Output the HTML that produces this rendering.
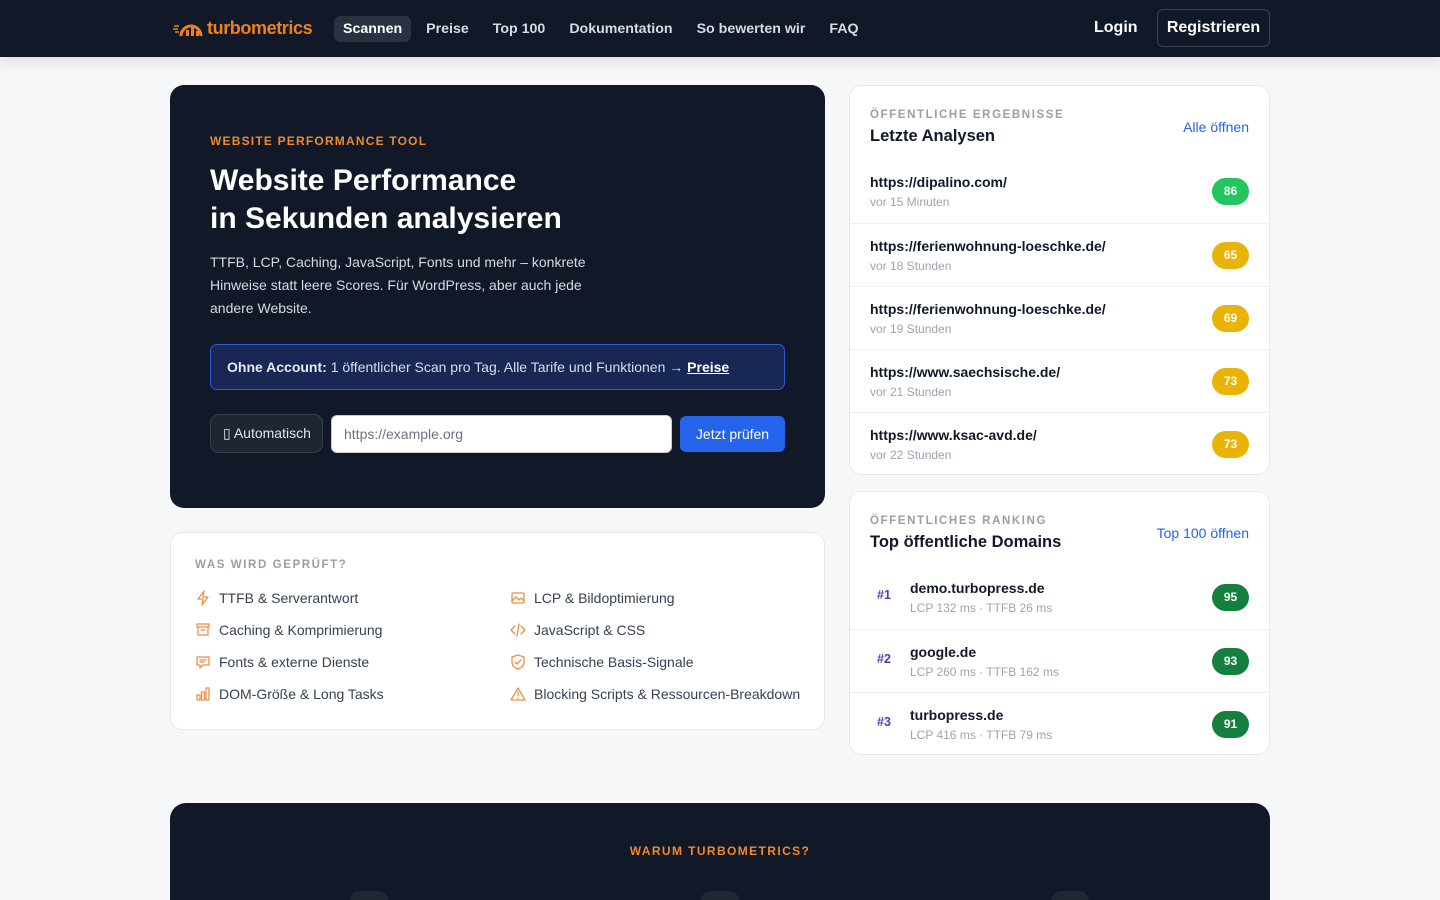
<!DOCTYPE html>
<html><head><meta charset="utf-8"><style>
*{box-sizing:border-box;margin:0;padding:0}
html,body{width:1440px;height:900px;overflow:hidden}
body{background:#f6f7f9;font-family:"Liberation Sans",sans-serif;color:#111827;position:relative}
.hdr{height:57px;background:#111827;position:relative;box-shadow:0 4px 14px rgba(0,0,0,.12)}
.logo{position:absolute;left:172px;top:17px;color:#f07f1c;font-weight:700;font-size:18px;display:flex;align-items:center;gap:1px;letter-spacing:-.4px}
.nav{position:absolute;left:334px;top:16px;display:flex}
.nav a{color:#d6dbe4;font-weight:700;font-size:14.2px;padding:5px 12px;border-radius:6px;text-decoration:none}
.nav a.act{background:#2a3140;color:#fff;padding:5px 9px;margin-right:3px}
.login{position:absolute;left:1094px;top:19px;color:#fff;font-weight:700;font-size:16px}
.reg{position:absolute;left:1157px;top:9px;width:113px;height:38px;border:1px solid #3a4252;border-radius:6px;color:#fff;font-weight:700;font-size:16px;text-align:center;line-height:36px}
.hero{position:absolute;left:170px;top:85px;width:655px;height:423px;background:#111827;border-radius:14px;padding:0 40px}
.eyebrow{color:#f0892f;font-weight:700;font-size:12px;letter-spacing:1.2px}
.hero h1{color:#fff;font-size:30px;line-height:38px;margin-top:14px;font-weight:700}
.hero p{color:#d5dae2;font-size:14px;line-height:23px;margin-top:13px;width:390px}
.note{margin-top:24px;height:46px;border:1px solid #2f5bd6;background:#182753;border-radius:7px;color:#d8dfee;font-size:14px;line-height:44px;padding-left:16px}
.note b{color:#e6ebf5}.note u{color:#fff;font-weight:700}
.row{display:flex;margin-top:24px;gap:8px;align-items:center}
.auto{width:113px;height:39px;border:1px solid #363e4c;background:#1f2632;border-radius:9px;color:#e3e6eb;font-size:14px;line-height:37px;padding-left:12px}
.inp{width:341px;height:38px;background:#fff;border-radius:6px;border:1px solid #ccc;color:#6b7280;font-size:14px;line-height:36px;padding-left:12px}
.btn{width:105px;height:36px;background:#2563eb;border-radius:6px;color:#fff;font-size:14px;line-height:36px;text-align:center}
.feat{position:absolute;left:170px;top:532px;width:655px;height:198px;background:#fff;border:1px solid #e6e8ec;border-radius:12px;padding:26px 24px}
.lbl{color:#9a9ea6;font-weight:700;font-size:11.5px;letter-spacing:1.6px}
.grid{display:grid;grid-template-columns:315px 300px;row-gap:14px;margin-top:18px}
.grid div{font-size:14px;color:#374151;display:flex;align-items:center;gap:8px;height:18px}
.grid svg{width:16px;height:16px;fill:none;stroke:#e8914a;stroke-width:1.3;stroke-linecap:round;stroke-linejoin:round}
.card{position:absolute;left:849px;width:421px;background:#fff;border:1px solid #e6e8ec;border-radius:12px}
.ch{position:relative;height:74px;padding:23px 20px 0}
.ch h3{font-size:16.5px;margin-top:6px;font-weight:700}
.ch a{position:absolute;right:20px;top:33px;color:#2563eb;font-size:14px}
.it{height:63px;border-top:1px solid #eef0f3;position:relative;padding:14px 20px 0}
.ch + .it{border-top:none}
.it .t{font-weight:700;font-size:14px;color:#111827}
.it .s{font-size:12px;color:#9ca3af;margin-top:5px}
.bd{position:absolute;right:20px;top:18px;width:37px;height:27px;border-radius:14px;color:#fff;font-weight:700;font-size:12px;text-align:center;line-height:27px}
.g{background:#22c55e}.y{background:#eab308}.dg{background:#15803d}
.rk{position:absolute;left:27px;top:22px;color:#4f3bbf;font-weight:700;font-size:12.5px}
.r2 .it{padding-left:60px}
.bot{position:absolute;left:170px;top:803px;width:1100px;height:97px;background:#111827;border-radius:16px 16px 0 0;text-align:center;overflow:hidden}
.bot .eyebrow{margin-top:41px;letter-spacing:1.4px}
.dot{position:absolute;top:88px;width:38px;height:40px;border-radius:10px;background:#1f2735}
</style></head><body>
<div class="hdr">
<div class="logo"><svg width="34" height="22" viewBox="0 0 34 22"><path d="M2 9h5M1 12h5M3 15h4" stroke="#f07f1c" stroke-width="1.5"/><path d="M9 19a10 10 0 1 1 20 0" fill="none" stroke="#f07f1c" stroke-width="3"/><rect x="14" y="13" width="3" height="6" fill="#f07f1c"/><rect x="19" y="10" width="3" height="9" fill="#f07f1c"/><rect x="24" y="14" width="3" height="5" fill="#f07f1c"/></svg>turbometrics</div>
<div class="nav"><a class="act">Scannen</a><a>Preise</a><a>Top 100</a><a>Dokumentation</a><a>So bewerten wir</a><a>FAQ</a></div>
<div class="login">Login</div><div class="reg">Registrieren</div>
</div>
<div class="hero">
<div class="eyebrow" style="margin-top:49px">WEBSITE PERFORMANCE TOOL</div>
<h1>Website Performance<br>in Sekunden analysieren</h1>
<p>TTFB, LCP, Caching, JavaScript, Fonts und mehr – konkrete Hinweise statt leere Scores. Für WordPress, aber auch jede andere Website.</p>
<div class="note"><b>Ohne Account:</b> 1 öffentlicher Scan pro Tag. Alle Tarife und Funktionen → <u>Preise</u></div>
<div class="row"><div class="auto">▯ Automatisch</div><div class="inp">https://example.org</div><div class="btn">Jetzt prüfen</div></div>
</div>
<div class="feat"><div class="lbl">WAS WIRD GEPRÜFT?</div>
<div class="grid">
<div><svg viewBox="0 0 16 16"><path d="M9 1L3 9h5l-1 6 6-8H8z"/></svg>TTFB &amp; Serverantwort</div>
<div><svg viewBox="0 0 16 16"><rect x="2" y="3" width="12" height="10" rx="1"/><path d="M2 11l4-4 3 3 2-2 3 3"/></svg>LCP &amp; Bildoptimierung</div>
<div><svg viewBox="0 0 16 16"><rect x="2" y="2" width="12" height="3"/><path d="M3 5v8h10V5M6 8h4"/></svg>Caching &amp; Komprimierung</div>
<div><svg viewBox="0 0 16 16"><path d="M5 4L1 8l4 4M11 4l4 4-4 4M9 2L7 14"/></svg>JavaScript &amp; CSS</div>
<div><svg viewBox="0 0 16 16"><path d="M2 3h12v8H8l-3 3v-3H2z M5 6h6M5 8h4"/></svg>Fonts &amp; externe Dienste</div>
<div><svg viewBox="0 0 16 16"><path d="M8 1l6 2v5c0 4-3 6-6 7-3-1-6-3-6-7V3z M5 8l2 2 4-4"/></svg>Technische Basis-Signale</div>
<div><svg viewBox="0 0 16 16"><rect x="2" y="9" width="3" height="5"/><rect x="6.5" y="6" width="3" height="8"/><rect x="11" y="2" width="3" height="12"/></svg>DOM-Größe &amp; Long Tasks</div>
<div><svg viewBox="0 0 16 16"><path d="M8 2L1 14h14z M8 6v4M8 12v.5"/></svg>Blocking Scripts &amp; Ressourcen-Breakdown</div>
</div></div>
<div class="card" style="top:85px;height:390px">
<div class="ch"><div class="lbl">ÖFFENTLICHE ERGEBNISSE</div><h3>Letzte Analysen</h3><a>Alle öffnen</a></div>
<div class="it"><div class="t">https://dipalino.com/</div><div class="s">vor 15 Minuten</div><div class="bd g">86</div></div>
<div class="it"><div class="t">https://ferienwohnung-loeschke.de/</div><div class="s">vor 18 Stunden</div><div class="bd y">65</div></div>
<div class="it"><div class="t">https://ferienwohnung-loeschke.de/</div><div class="s">vor 19 Stunden</div><div class="bd y">69</div></div>
<div class="it"><div class="t">https://www.saechsische.de/</div><div class="s">vor 21 Stunden</div><div class="bd y">73</div></div>
<div class="it"><div class="t">https://www.ksac-avd.de/</div><div class="s">vor 22 Stunden</div><div class="bd y">73</div></div>
</div>
<div class="card r2" style="top:491px;height:264px">
<div class="ch"><div class="lbl">ÖFFENTLICHES RANKING</div><h3>Top öffentliche Domains</h3><a>Top 100 öffnen</a></div>
<div class="it"><span class="rk">#1</span><div class="t">demo.turbopress.de</div><div class="s">LCP 132 ms · TTFB 26 ms</div><div class="bd dg">95</div></div>
<div class="it"><span class="rk">#2</span><div class="t">google.de</div><div class="s">LCP 260 ms · TTFB 162 ms</div><div class="bd dg">93</div></div>
<div class="it"><span class="rk">#3</span><div class="t">turbopress.de</div><div class="s">LCP 416 ms · TTFB 79 ms</div><div class="bd dg">91</div></div>
</div>
<div class="bot"><div class="eyebrow">WARUM TURBOMETRICS?</div>
<div class="dot" style="left:180px"></div><div class="dot" style="left:531px"></div><div class="dot" style="left:881px"></div></div>
</body></html>
